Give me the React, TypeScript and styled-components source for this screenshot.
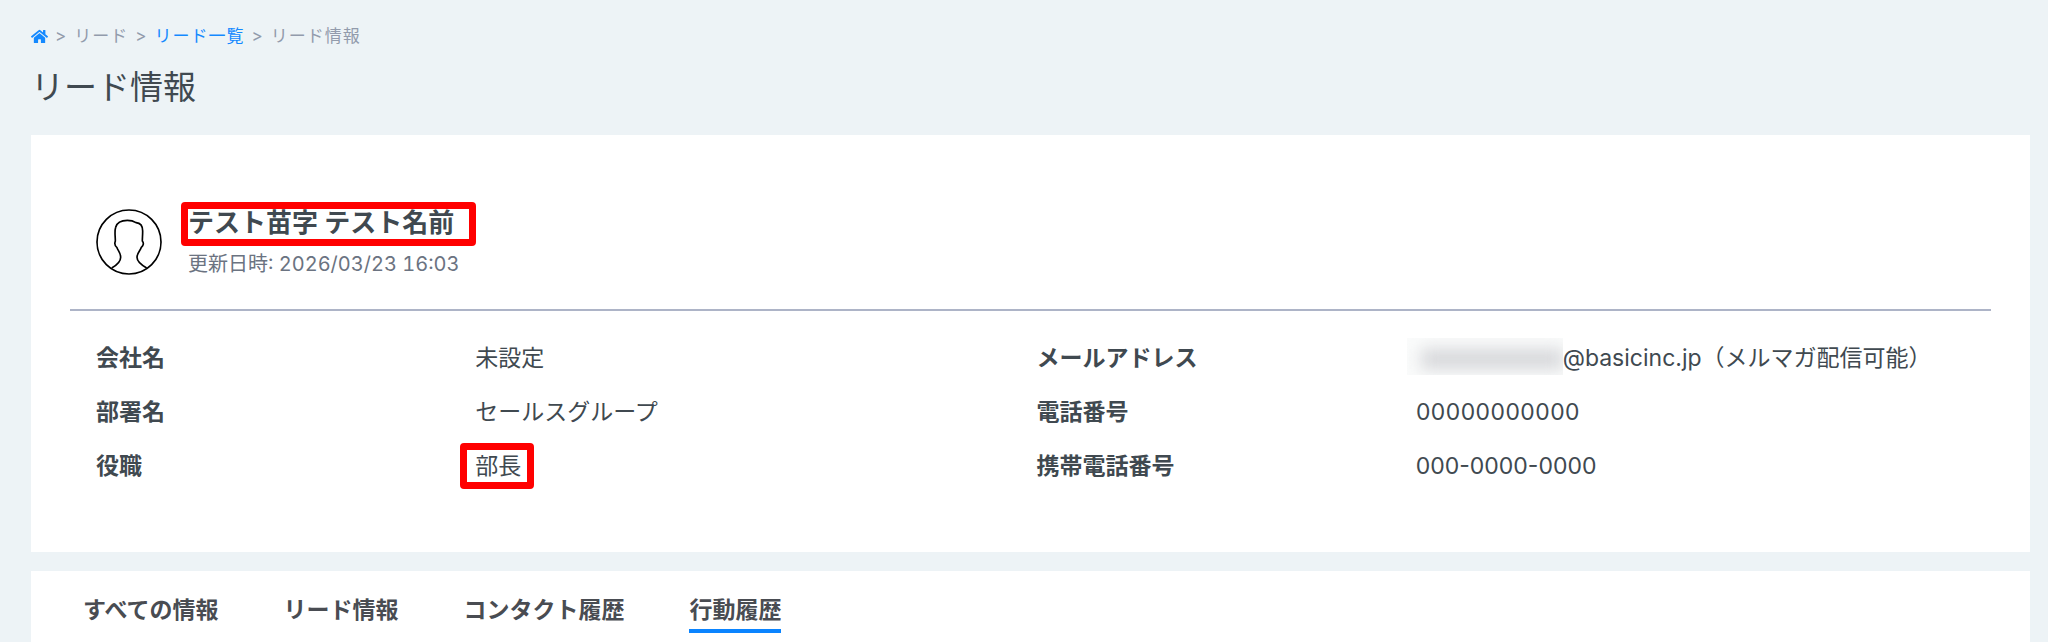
import React from "react";
import styled, { createGlobalStyle } from "styled-components";
import { FaHome } from "react-icons/fa";

const GlobalStyle = createGlobalStyle`
  *, *::before, *::after { box-sizing: border-box; }
  body {
    margin: 0;
    background: #edf3f6;
    color: #404950;
    font-family: Inter, "Noto Sans CJK JP", sans-serif;
    font-size: 23px;
    line-height: 34px;
  }
  h1, h2, p, ol, ul, dl, dd { margin: 0; padding: 0; }
`;

const Page = styled.main`
  display: flex;
  flex-direction: column;
  padding: 24px 18px 0 31px;
`;

const Breadcrumb = styled.ol`
  display: flex;
  align-items: center;
  list-style: none;
  color: #929bac;
  font-size: 17px;
  line-height: 24px;
  letter-spacing: 1px;
`;

const Crumb = styled.li`
  display: flex;
  align-items: center;

  & + &::before {
    content: ">";
    margin: 0 7px;
  }
`;

const CrumbLink = styled.a`
  display: flex;
  align-items: center;
  color: #1489ff;
  text-decoration: none;
`;

const PageTitle = styled.h1`
  margin: 14px 0 23px;
  font-size: 33px;
  line-height: 50px;
  font-weight: 400;
`;

const Card = styled.section`
  background: #fff;
`;

const ProfileCard = styled(Card)`
  padding: 66px 39px 59px;
`;

const Profile = styled.header`
  display: flex;
  align-items: center;
  gap: 26px;
  padding: 0 26px 26px;
  border-bottom: 2px solid #adb4c7;
`;

const Avatar = styled.svg`
  width: 66px;
  height: 66px;
  fill: none;
  stroke: #000;
  stroke-width: 5;
`;

const Name = styled.h2`
  font-size: 26px;
  line-height: 44px;
  font-weight: 700;
`;

const Updated = styled.p`
  color: #6b7381;
  font-size: 20px;
  line-height: 38px;
  font-variant-numeric: tabular-nums;
`;

const Marked = styled.span<{ $inset: string }>`
  position: relative;

  &::after {
    content: "";
    position: absolute;
    inset: ${({ $inset }) => $inset};
    border: 7px solid #f00;
    border-radius: 4px;
    pointer-events: none;
  }
`;

const Details = styled.div`
  display: grid;
  grid-template-columns: 1fr 1fr;
  padding: 20px 14px 0 26px;
`;

const DetailList = styled.dl`
  display: flex;
  flex-direction: column;
`;

const DetailRow = styled.div`
  display: grid;
  grid-template-columns: 2fr 3fr;
  column-gap: 5px;
  padding: 10px 0;
`;

const DetailLabel = styled.dt`
  font-weight: 700;
`;

const DetailValue = styled.dd<{ $tabular?: boolean }>`
  display: flex;
  white-space: nowrap;
  font-variant-numeric: ${({ $tabular }) => ($tabular ? "tabular-nums" : "normal")};
`;

const Redacted = styled.span`
  position: relative;
  width: 147px;
`;

const RedactedHaze = styled.span`
  position: absolute;
  inset: -3px 0 0 -9px;
  overflow: hidden;
  background: #fafbfb;

  &::before {
    content: "";
    position: absolute;
    inset: 11px 0 6px 14px;
    background: #d6d7da;
    filter: blur(8px);
  }
`;

const TabCard = styled(Card)`
  margin-top: 19px;
  padding: 22px 52px 9px;
`;

const Tabs = styled.nav`
  display: flex;
  gap: 65px;
`;

const Tab = styled.button<{ $active?: boolean }>`
  padding: 0 0 2px;
  border: 0;
  border-bottom: 4px solid ${({ $active }) => ($active ? "#0a84ff" : "transparent")};
  background: none;
  color: #494c52;
  font: inherit;
  font-weight: 700;
  cursor: pointer;
`;

const tabs = ["すべての情報", "リード情報", "コンタクト履歴", "行動履歴"];

export default function App() {
  return (
    <>
      <GlobalStyle />
      <Page>
        <nav aria-label="パンくずリスト">
          <Breadcrumb>
            <Crumb>
              <CrumbLink href="#" aria-label="ホーム">
                <FaHome />
              </CrumbLink>
            </Crumb>
            <Crumb>リード</Crumb>
            <Crumb>
              <CrumbLink href="#">リード一覧</CrumbLink>
            </Crumb>
            <Crumb>リード情報</Crumb>
          </Breadcrumb>
        </nav>
        <PageTitle>リード情報</PageTitle>

        <ProfileCard>
          <Profile>
            <Avatar viewBox="18 23 198 198" aria-hidden="true">
              <circle cx="117" cy="122" r="96" />
              <path d="M65 200C82 191 92 182 92 168C92 154 84 148 81 139C77 136 72 130 76 119C76 103 73 91 77 78C81 63 96 57 112 57C124 57 132 60 138 64C152 65 158 75 158 89C158 102 157 109 157 119C163 126 159 134 154 138C151 148 141 155 141 168C141 182 154 191 170 200" />
            </Avatar>
            <div>
              <Name>
                <Marked $inset="-5px -22px -8px -7px">テスト苗字 テスト名前</Marked>
              </Name>
              <Updated>更新日時: 2026/03/23 16:03</Updated>
            </div>
          </Profile>

          <Details>
            <DetailList>
              <DetailRow>
                <DetailLabel>会社名</DetailLabel>
                <DetailValue>未設定</DetailValue>
              </DetailRow>
              <DetailRow>
                <DetailLabel>部署名</DetailLabel>
                <DetailValue>セールスグループ</DetailValue>
              </DetailRow>
              <DetailRow>
                <DetailLabel>役職</DetailLabel>
                <DetailValue>
                  <Marked $inset="-6px -13px -6px -15px">部長</Marked>
                </DetailValue>
              </DetailRow>
            </DetailList>
            <DetailList>
              <DetailRow>
                <DetailLabel>メールアドレス</DetailLabel>
                <DetailValue>
                  <Redacted>
                    <RedactedHaze />
                  </Redacted>
                  @basicinc.jp（メルマガ配信可能）
                </DetailValue>
              </DetailRow>
              <DetailRow>
                <DetailLabel>電話番号</DetailLabel>
                <DetailValue $tabular>00000000000</DetailValue>
              </DetailRow>
              <DetailRow>
                <DetailLabel>携帯電話番号</DetailLabel>
                <DetailValue>000-0000-0000</DetailValue>
              </DetailRow>
            </DetailList>
          </Details>
        </ProfileCard>

        <TabCard>
          <Tabs aria-label="リードの詳細">
            {tabs.map((label) => (
              <Tab key={label} type="button" $active={label === "行動履歴"}>
                {label}
              </Tab>
            ))}
          </Tabs>
        </TabCard>
      </Page>
    </>
  );
}
